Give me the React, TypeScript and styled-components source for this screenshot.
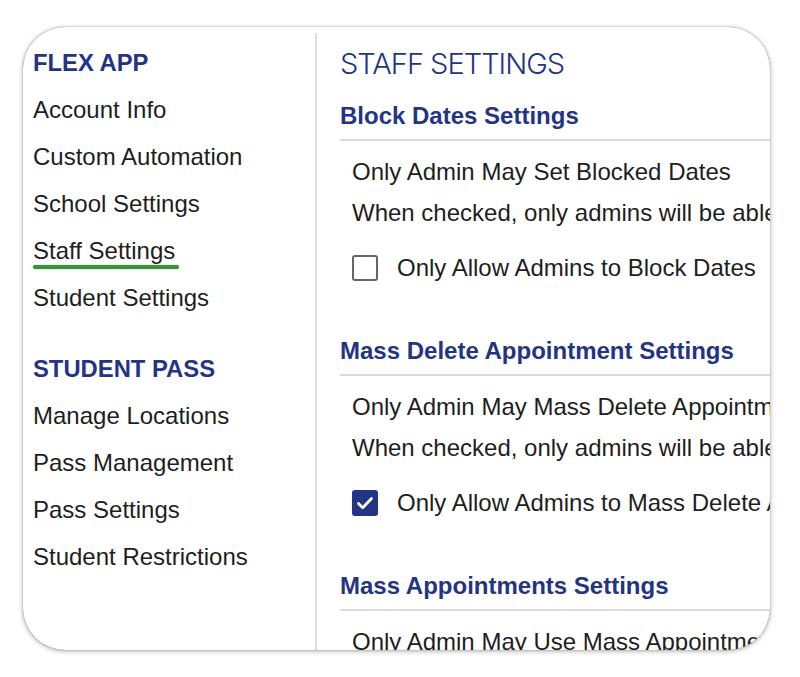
import React from "react";
import styled, { createGlobalStyle } from "styled-components";

const GlobalStyle = createGlobalStyle`
  html, body {
    margin: 0;
    padding: 0;
    background: #fff;
  }
  body {
    font-family: "Liberation Sans", Arial, Helvetica, sans-serif;
    color: #222;
  }
`;

type NavGroup = {
  title: string;
  items: string[];
};

const navGroups: NavGroup[] = [
  {
    title: "FLEX APP",
    items: [
      "Account Info",
      "Custom Automation",
      "School Settings",
      "Staff Settings",
      "Student Settings",
    ],
  },
  {
    title: "STUDENT PASS",
    items: [
      "Manage Locations",
      "Pass Management",
      "Pass Settings",
      "Student Restrictions",
    ],
  },
];

type Section = {
  title: string;
  label: string;
  description: string;
  option?: string;
  checked?: boolean;
};

const sections: Section[] = [
  {
    title: "Block Dates Settings",
    label: "Only Admin May Set Blocked Dates",
    description: "When checked, only admins will be able to set blocked dates",
    option: "Only Allow Admins to Block Dates",
    checked: false,
  },
  {
    title: "Mass Delete Appointment Settings",
    label: "Only Admin May Mass Delete Appointments",
    description:
      "When checked, only admins will be able to mass delete appointments",
    option: "Only Allow Admins to Mass Delete Appointments",
    checked: true,
  },
  {
    title: "Mass Appointments Settings",
    label: "Only Admin May Use Mass Appointments",
    description:
      "When checked, only admins will be able to use mass appointments",
  },
];

const App = () => {
  const active = "Staff Settings";

  return (
    <>
      <GlobalStyle />
      <Page>
        <Card>
          <Sidebar>
            {navGroups.map((group) => (
              <NavGroupBox key={group.title}>
                <GroupTitle>{group.title}</GroupTitle>
                {group.items.map((item) => (
                  <NavItem key={item}>
                    <NavLabel $active={item === active}>{item}</NavLabel>
                  </NavItem>
                ))}
              </NavGroupBox>
            ))}
          </Sidebar>
          <Divider />
          <Main>
            <PageTitle>STAFF SETTINGS</PageTitle>
            {sections.map((s) => (
              <SectionBox key={s.title}>
                <SectionTitle>{s.title}</SectionTitle>
                <Row>{s.label}</Row>
                <Row>{s.description}</Row>
                {s.option && (
                  <CheckRow>
                    <CheckBox $checked={!!s.checked}>
                      {s.checked && (
                        <svg width="22" height="22" viewBox="0 0 22 22">
                          <path
                            d="M4.5 11.5l4.2 4.2L17.5 6.5"
                            fill="none"
                            stroke="#fff"
                            strokeWidth="2.8"
                            strokeLinecap="round"
                            strokeLinejoin="round"
                          />
                        </svg>
                      )}
                    </CheckBox>
                    <span>{s.option}</span>
                  </CheckRow>
                )}
              </SectionBox>
            ))}
          </Main>
        </Card>
      </Page>
    </>
  );
};

const Page = styled.div`
  padding: 27px 30px 27px 23px;
`;

const Card = styled.div`
  display: flex;
  height: 623px;
  background: #fff;
  border-radius: 42px;
  overflow: hidden;
  box-shadow: 0 0 1px rgba(0, 0, 0, 0.5), 0 1px 5px rgba(0, 0, 0, 0.35);
`;

const Sidebar = styled.div`
  width: 282px;
  flex-shrink: 0;
  padding: 12px 0 0 10px;
`;

const NavGroupBox = styled.div`
  & + & {
    margin-top: 24px;
  }
`;

const GroupTitle = styled.div`
  font-size: 23.8px;
  line-height: 47px;
  font-weight: 700;
  color: #233485;
`;

const NavItem = styled.div`
  font-size: 24px;
  line-height: 47px;
  color: #1e1e1e;
  white-space: nowrap;
`;

const NavLabel = styled.span<{ $active: boolean }>`
  position: relative;
  display: inline-block;

  &::after {
    content: "";
    display: ${(p) => (p.$active ? "block" : "none")};
    position: absolute;
    left: 0;
    right: -4px;
    bottom: 5px;
    height: 4px;
    border-radius: 2px;
    background: #3d8f3b;
    box-shadow: 0 0 1.5px rgba(61, 143, 59, 0.7);
  }
`;

const Divider = styled.div`
  width: 2px;
  margin-top: 6px;
  background: #dcdcdc;
  flex-shrink: 0;
`;

const Main = styled.div`
  flex: 1;
  min-width: 0;
  padding: 19px 0 0 23px;
  overflow: hidden;
`;

const PageTitle = styled.div`
  font-family: Inter, "Liberation Sans", sans-serif;
  font-weight: 300;
  font-size: 29px;
  letter-spacing: -1px;
  line-height: 36px;
  color: #233485;
  white-space: nowrap;
`;

const SectionBox = styled.div`
  margin-top: 19px;

  & + & {
    margin-top: 48px;
  }
`;

const SectionTitle = styled.div`
  font-size: 24px;
  line-height: 30px;
  font-weight: 700;
  color: #233485;
  padding-bottom: 8px;
  border-bottom: 2px solid #dadada;
  white-space: nowrap;
  margin-bottom: 10px;
`;

const Row = styled.div`
  font-size: 24px;
  line-height: 41px;
  padding-left: 12px;
  white-space: nowrap;
  color: #1e1e1e;
`;

const CheckRow = styled.div`
  display: flex;
  align-items: center;
  gap: 19px;
  height: 41px;
  margin-top: 14px;
  padding-left: 12px;
  font-size: 24px;
  white-space: nowrap;
  color: #1e1e1e;
`;

const CheckBox = styled.div<{ $checked: boolean }>`
  box-sizing: border-box;
  width: 26px;
  height: 26px;
  flex-shrink: 0;
  border-radius: 3px;
  display: flex;
  align-items: center;
  justify-content: center;
  background: ${(p) => (p.$checked ? "#233485" : "#fff")};
  border: ${(p) => (p.$checked ? "none" : "2.5px solid #666")};
`;

export default App;
